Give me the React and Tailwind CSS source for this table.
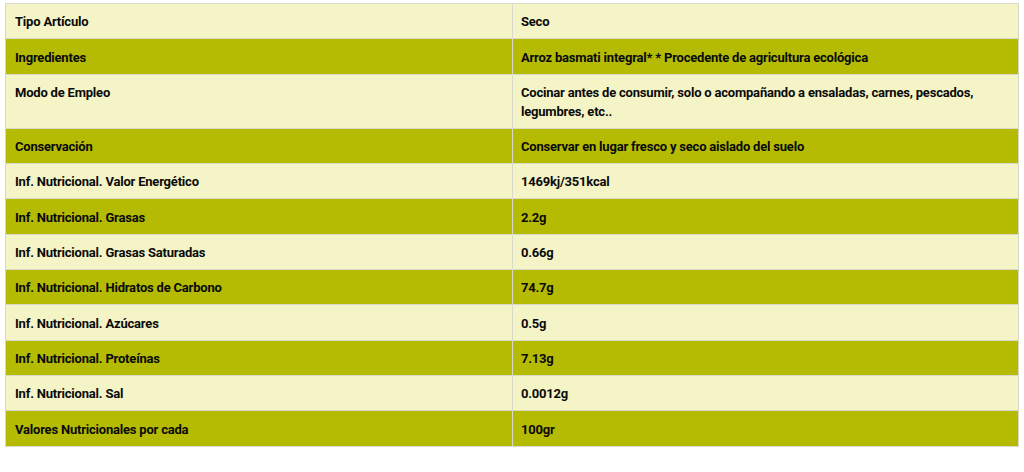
const rows = [
  ["Tipo Artículo", "Seco"],
  ["Ingredientes", "Arroz basmati integral* * Procedente de agricultura ecológica"],
  [
    "Modo de Empleo",
    "Cocinar antes de consumir, solo o acompañando a ensaladas, carnes, pescados, legumbres, etc..",
  ],
  ["Conservación", "Conservar en lugar fresco y seco aislado del suelo"],
  ["Inf. Nutricional. Valor Energético", "1469kj/351kcal"],
  ["Inf. Nutricional. Grasas", "2.2g"],
  ["Inf. Nutricional. Grasas Saturadas", "0.66g"],
  ["Inf. Nutricional. Hidratos de Carbono", "74.7g"],
  ["Inf. Nutricional. Azúcares", "0.5g"],
  ["Inf. Nutricional. Proteínas", "7.13g"],
  ["Inf. Nutricional. Sal", "0.0012g"],
  ["Valores Nutricionales por cada", "100gr"],
];

export default function App() {
  return (
    <div className="w-[1024px] h-[472px] bg-white pt-[3px] px-[5px] font-['Roboto',sans-serif]">
      <table className="w-[1014px] border-collapse text-[13px] leading-[19px] font-bold tracking-[-0.2px] text-[#0a0a0a]">
        <tbody>
          {rows.map(([label, value], i) => (
            <tr key={label} className={i % 2 ? "bg-[#b4bb02]" : "bg-[#f4f4c6]"}>
              <td className="w-[507px] border border-[#d9d9c9] px-[9px] pt-[8.3px] pb-[7px] align-top">
                {label}
              </td>
              <td className="border border-[#d9d9c9] pl-[8px] pr-[9px] pt-[8.3px] pb-[7px] align-top">
                {value}
              </td>
            </tr>
          ))}
        </tbody>
      </table>
    </div>
  );
}
